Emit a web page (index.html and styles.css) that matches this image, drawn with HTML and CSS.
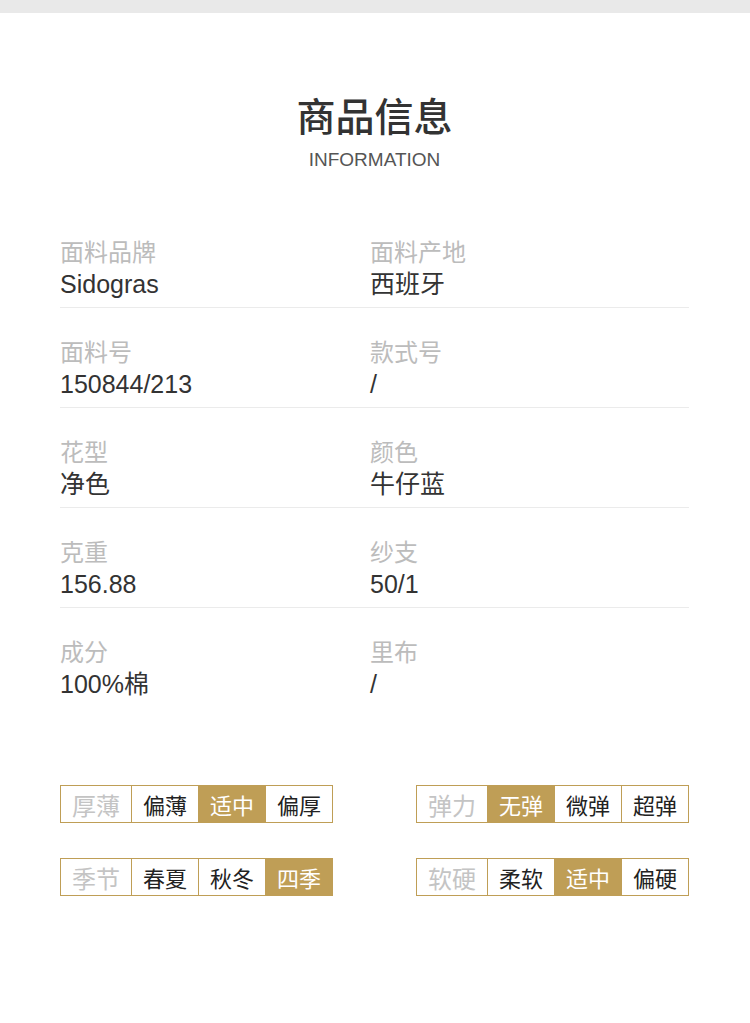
FILE: index.html
```html
<!DOCTYPE html>
<html lang="zh-CN">
<head>
<meta charset="utf-8">
<title>商品信息</title>
<link rel="stylesheet" href="styles.css">
</head>
<body>
<div class="topbar"></div>
<main class="page">
  <header class="heading">
    <h1 class="title">商品信息</h1>
    <div class="subtitle">INFORMATION</div>
  </header>

  <section class="specs">
    <div class="row">
      <div class="cell"><div class="label">面料品牌</div><div class="value">Sidogras</div></div>
      <div class="cell"><div class="label">面料产地</div><div class="value">西班牙</div></div>
    </div>
    <div class="row">
      <div class="cell"><div class="label">面料号</div><div class="value">150844/213</div></div>
      <div class="cell"><div class="label">款式号</div><div class="value">/</div></div>
    </div>
    <div class="row">
      <div class="cell"><div class="label">花型</div><div class="value">净色</div></div>
      <div class="cell"><div class="label">颜色</div><div class="value">牛仔蓝</div></div>
    </div>
    <div class="row">
      <div class="cell"><div class="label">克重</div><div class="value">156.88</div></div>
      <div class="cell"><div class="label">纱支</div><div class="value">50/1</div></div>
    </div>
    <div class="row last">
      <div class="cell"><div class="label">成分</div><div class="value">100%棉</div></div>
      <div class="cell"><div class="label">里布</div><div class="value">/</div></div>
    </div>
  </section>

  <section class="tags">
    <div class="tag-row">
      <div class="group">
        <span class="opt head">厚薄</span><span class="opt">偏薄</span><span class="opt on">适中</span><span class="opt">偏厚</span>
      </div>
      <div class="group">
        <span class="opt head">弹力</span><span class="opt on">无弹</span><span class="opt">微弹</span><span class="opt">超弹</span>
      </div>
    </div>
    <div class="tag-row">
      <div class="group">
        <span class="opt head">季节</span><span class="opt">春夏</span><span class="opt">秋冬</span><span class="opt on">四季</span>
      </div>
      <div class="group">
        <span class="opt head">软硬</span><span class="opt">柔软</span><span class="opt on">适中</span><span class="opt">偏硬</span>
      </div>
    </div>
  </section>
</main>
</body>
</html>
```
FILE: styles.css
```css
* { box-sizing: border-box; }
html, body { margin: 0; padding: 0; background: #fff; }
body {
  font-family: "Liberation Sans", "Noto Sans CJK SC", sans-serif;
  color: #333;
}
.topbar { height: 13px; background: #e9e9e9; }
.page { padding: 0 61px 0 60px; }

.heading { text-align: center; padding-top: 78px; }
.title {
  margin: 0;
  font-family: "Noto Sans CJK SC", sans-serif;
  font-size: 39px;
  line-height: 46px;
  font-weight: 500;
  color: #333;
}
.subtitle {
  margin-top: 12px;
  font-size: 19px;
  line-height: 22px;
  color: #555;
  font-weight: 400;
}

.specs { margin-top: 37px; }
.row {
  display: grid;
  grid-template-columns: 310px 1fr;
  padding: 27px 0 6px;
  border-bottom: 1px solid #ebebeb;
}
.row.last { border-bottom: none; }
.label {
  font-family: "Noto Sans CJK SC", sans-serif;
  font-size: 24px;
  line-height: 32px;
  color: #bcbcbc;
}
.value {
  margin-top: 1px;
  font-family: "Liberation Sans", "Noto Sans CJK SC", sans-serif;
  font-size: 25px;
  line-height: 33px;
  color: #333;
}

.tags { margin-top: 78px; }
.tag-row {
  display: flex;
  justify-content: space-between;
  margin-bottom: 35px;
}
.group {
  display: flex;
  border: 1px solid #bf9e56;
  height: 38px;
}
.opt {
  width: 67px;
  border-left: 1px solid #bf9e56;
  display: flex;
  align-items: center;
  justify-content: center;
  font-family: "Noto Sans CJK SC", sans-serif;
  font-size: 22px;
  color: #222;
}
.opt.head {
  width: 70px;
  border-left: none;
  font-size: 24px;
  color: #c4c4c4;
}
.opt.on {
  background: #bf9e56;
  color: #fff;
}
```
